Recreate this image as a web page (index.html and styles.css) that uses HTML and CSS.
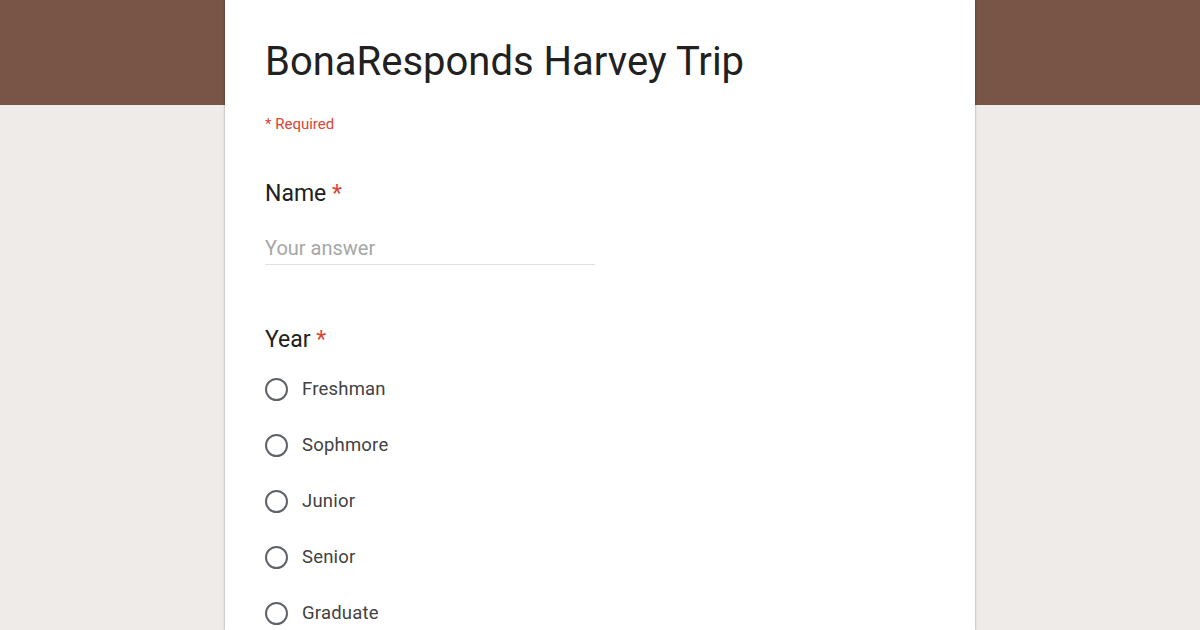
FILE: index.html
```html
<!DOCTYPE html>
<html>
<head>
<meta charset="utf-8">
<link rel="stylesheet" href="styles.css">
</head>
<body>
<div class="banner"></div>
<main class="card">
  <h1 class="title">BonaResponds Harvey Trip</h1>
  <div class="required-note">* Required</div>
  <section class="question q-name">
    <div class="q-title">Name <span class="star">*</span></div>
    <div class="answer">Your answer</div>
  </section>
  <section class="question q-year">
    <div class="q-title">Year <span class="star">*</span></div>
    <div class="options">
      <div class="option"><span class="radio"></span><span class="label">Freshman</span></div>
      <div class="option"><span class="radio"></span><span class="label">Sophmore</span></div>
      <div class="option"><span class="radio"></span><span class="label">Junior</span></div>
      <div class="option"><span class="radio"></span><span class="label">Senior</span></div>
      <div class="option"><span class="radio"></span><span class="label">Graduate</span></div>
    </div>
  </section>
</main>
</body>
</html>
```
FILE: styles.css
```css
html, body {
  margin: 0;
  padding: 0;
  height: 100%;
  overflow: hidden;
}
body {
  background: #efebe9;
  font-family: Roboto, "Liberation Sans", Arial, sans-serif;
  position: relative;
}
.banner {
  position: absolute;
  left: 0;
  top: 0;
  width: 100%;
  height: 105px;
  background: #795548;
}
.card {
  position: relative;
  width: 750px;
  margin: 0 auto;
  height: 100%;
  overflow: hidden;
  background: #fff;
  box-shadow: 0 0 2px rgba(0,0,0,0.25), 0 1px 3px rgba(0,0,0,0.12);
  padding: 0 40px;
  box-sizing: border-box;
}
.title {
  margin: 0;
  padding-top: 38px;
  font-weight: 400;
  font-size: 40px;
  line-height: 48px;
  color: #212121;
}
.required-note {
  margin-top: 28px;
  font-size: 15px;
  line-height: 20px;
  color: #db4437;
}
.q-title {
  font-size: 23px;
  line-height: 30px;
  color: #212121;
}
.star {
  color: #db4437;
}
.q-name {
  padding-top: 45px;
}
.answer {
  width: 330px;
  margin-top: 27px;
  font-size: 20px;
  line-height: 24px;
  color: #a6a6a6;
  padding-bottom: 4px;
  border-bottom: 1px solid #e0e0e0;
}
.q-year {
  padding-top: 60px;
}
.options {
  margin-top: 6px;
  display: flex;
  flex-direction: column;
}
.option {
  display: flex;
  align-items: center;
  height: 56px;
}
.radio {
  width: 19px;
  height: 19px;
  border: 2px solid #5f6368;
  border-radius: 50%;
  margin-right: 14px;
  flex: none;
}
.label {
  font-size: 18.5px;
  color: #424242;
  letter-spacing: 0.2px;
}
```
